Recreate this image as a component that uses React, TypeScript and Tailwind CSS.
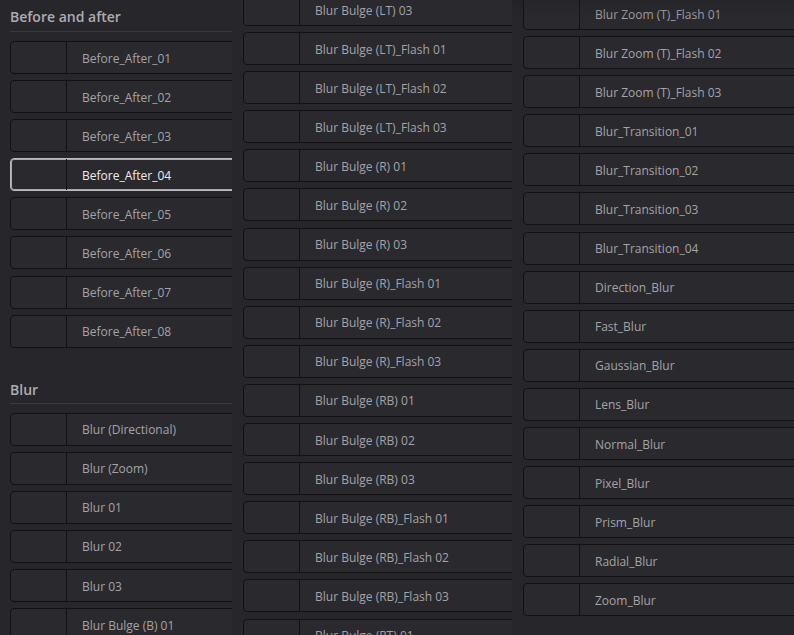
import React from "react";

const col1a = ["Before_After_01","Before_After_02","Before_After_03","Before_After_04","Before_After_05","Before_After_06","Before_After_07","Before_After_08"];
const col1b = ["Blur (Directional)","Blur (Zoom)","Blur 01","Blur 02","Blur 03","Blur Bulge (B) 01"];
const col2 = ["Blur Bulge (LT) 03","Blur Bulge (LT)_Flash 01","Blur Bulge (LT)_Flash 02","Blur Bulge (LT)_Flash 03","Blur Bulge (R) 01","Blur Bulge (R) 02","Blur Bulge (R) 03","Blur Bulge (R)_Flash 01","Blur Bulge (R)_Flash 02","Blur Bulge (R)_Flash 03","Blur Bulge (RB) 01","Blur Bulge (RB) 02","Blur Bulge (RB) 03","Blur Bulge (RB)_Flash 01","Blur Bulge (RB)_Flash 02","Blur Bulge (RB)_Flash 03","Blur Bulge (RT) 01"];
const col3 = ["Blur Zoom (T)_Flash 01","Blur Zoom (T)_Flash 02","Blur Zoom (T)_Flash 03","Blur_Transition_01","Blur_Transition_02","Blur_Transition_03","Blur_Transition_04","Direction_Blur","Fast_Blur","Gaussian_Blur","Lens_Blur","Normal_Blur","Pixel_Blur","Prism_Blur","Radial_Blur","Zoom_Blur"];

function Row({ label, selected }: { label: string; selected?: boolean }) {
  return (
    <div
      className={
        "flex h-[33px] w-[300px] shrink-0 rounded-[4px] border bg-[#2a292e] " +
        (selected
          ? "border-[#bcbcbe] shadow-[inset_0_0_0_1px_#a9a9ac]"
          : "border-[#111114]")
      }
    >
      <div className="h-full w-[56px] shrink-0 border-r border-[#111114]" />
      <div
        className={
          "flex items-center pl-[15px] pt-[2px] text-[12px] leading-none " +
          (selected ? "text-[#ededee]" : "text-[#a4a4a8]")
        }
      >
        {label}
      </div>
    </div>
  );
}

export default function App() {
  return (
    <div
      className="flex h-[635px] w-[794px] overflow-hidden bg-[#27262b]"
      style={{ fontFamily: '"Open Sans", "Noto Sans", sans-serif' }}
    >
      {/* Column 1 */}
      <div className="h-full w-[232px] shrink-0 overflow-hidden pl-[10px]">
        <div className="border-b border-[#3a393f] pt-[7px] pb-[4px] text-[14px] font-semibold leading-[20px] text-[#adadb1]">
          Before and after
        </div>
        <div className="mt-[9px] flex flex-col gap-[6.1px]">
          {col1a.map((l) => (
            <Row key={l} label={l} selected={l === "Before_After_04"} />
          ))}
        </div>
        <div className="mt-[32px] border-b border-[#3a393f] pb-[3px] text-[14px] font-semibold leading-[20px] text-[#adadb1]">
          Blur
        </div>
        <div className="mt-[9px] flex flex-col gap-[6.1px]">
          {col1b.map((l) => (
            <Row key={l} label={l} />
          ))}
        </div>
      </div>

      {/* Column 2 */}
      <div className="h-full w-[280px] shrink-0 overflow-hidden pl-[11px]">
        <div className="mt-[-7px] flex flex-col gap-[6.1px]">
          {col2.map((l) => (
            <Row key={l} label={l} />
          ))}
        </div>
      </div>

      {/* Column 3 */}
      <div className="relative h-full flex-1 overflow-hidden pl-[11px]">
        <div className="mt-[-3px] flex flex-col gap-[6.1px]">
          {col3.map((l) => (
            <Row key={l} label={l} />
          ))}
        </div>
        <div className="pointer-events-none absolute left-0 right-0 top-0 h-[20px] bg-gradient-to-b from-[#1c1b1f]/30 to-transparent" />
      </div>
    </div>
  );
}
